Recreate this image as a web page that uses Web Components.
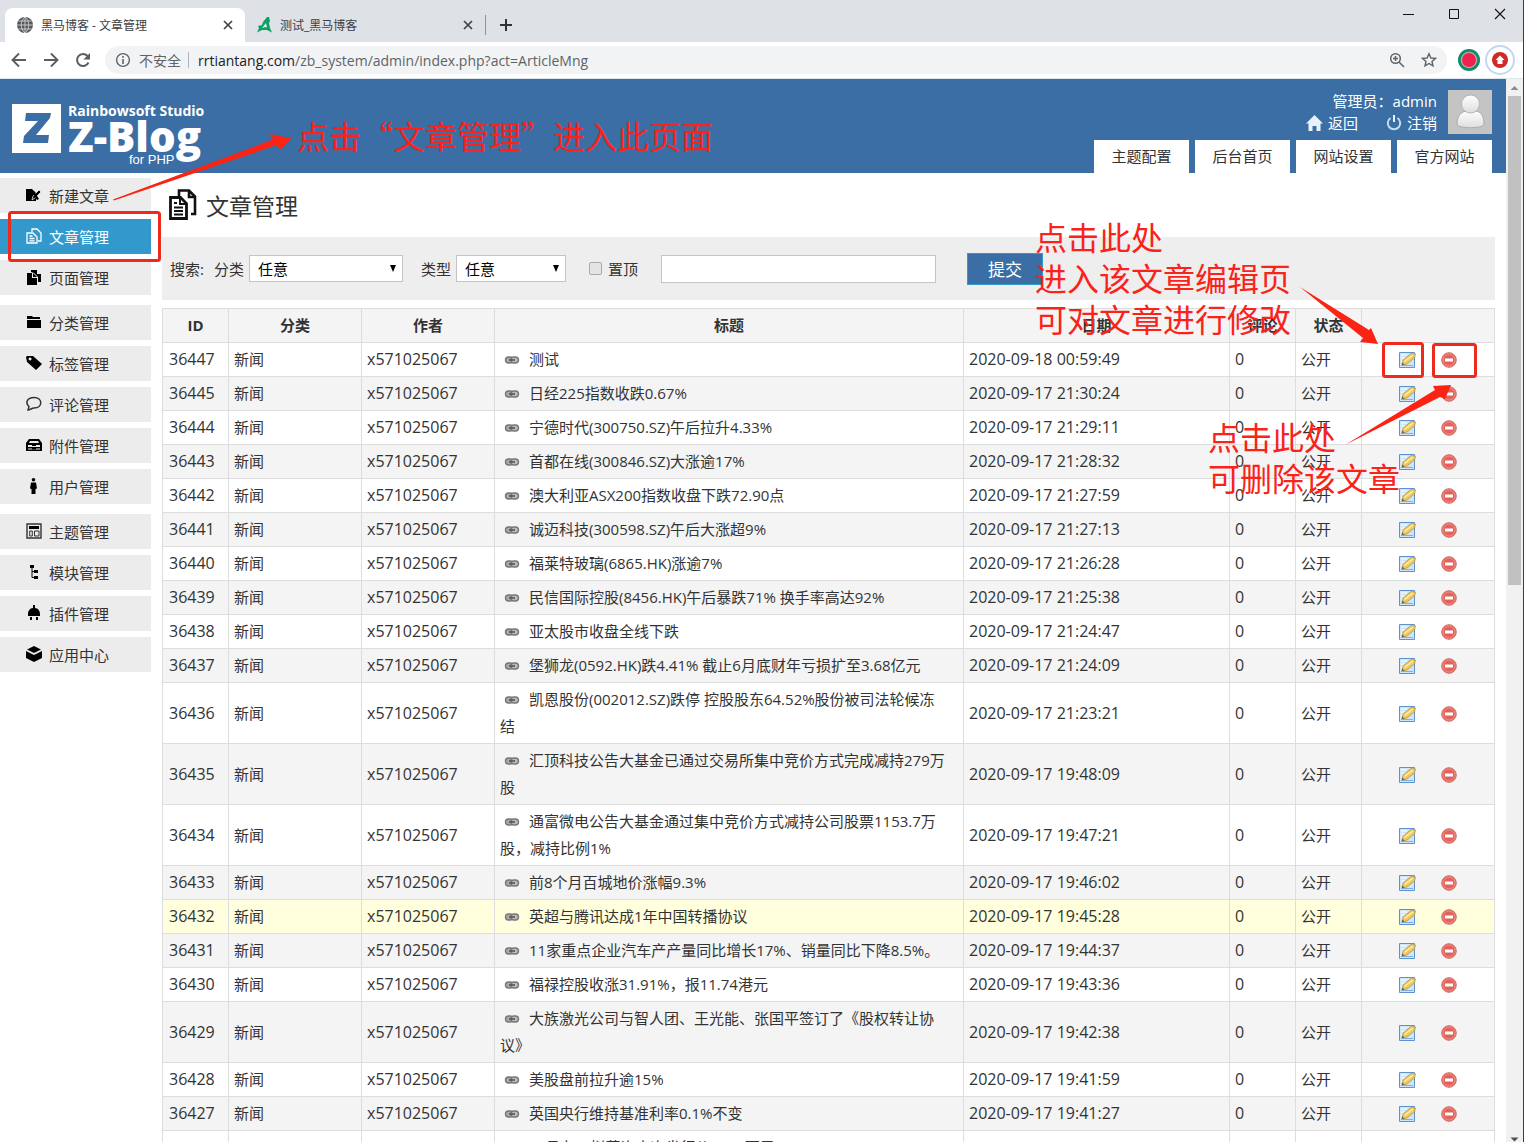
<!DOCTYPE html>
<html lang="zh-CN">
<head>
<meta charset="utf-8">
<title>黑马博客 - 文章管理</title>
<style>
html,body{margin:0;height:100%;overflow:hidden}
body{font-family:"Open Sans","Noto Sans CJK SC",sans-serif;font-size:15px;color:#333;background:#fff}
</style>
</head>
<body>
<browser-window>
  <browser-tabs slot="chrome"></browser-tabs>
  <browser-toolbar slot="chrome"></browser-toolbar>
  <zb-header></zb-header>
  <zb-layout>
    <zb-sidebar slot="side"></zb-sidebar>
    <zb-heading>文章管理</zb-heading>
    <zb-search></zb-search>
    <zb-articles></zb-articles>
  </zb-layout>
</browser-window>
<guide-marks></guide-marks>
<guide-note style="--x:297px;--y:115px">点击“文章管理”进入此页面</guide-note>
<guide-note style="--x:1035px;--y:216px">点击此处<br>进入该文章编辑页<br>可对文章进行修改</guide-note>
<guide-note style="--x:1208px;--y:416px">点击此处<br>可删除该文章</guide-note>

<script>
function define(name, html, init) {
  const tpl = document.createElement('template');
  tpl.innerHTML = '<style>*,:host{box-sizing:border-box}svg{display:block;flex:none}a{color:inherit;text-decoration:none}</style>' + html;
  customElements.define(name, class extends HTMLElement {
    constructor() {
      super();
      this.attachShadow({mode: 'open'}).append(tpl.content.cloneNode(true));
      if (init) init(this.shadowRoot);
    }
  });
}

define('browser-window', `
<style>
:host{display:flex;flex-direction:column;height:100vh;overflow:hidden;border-right:1px solid #3c3a52}
.view{flex:1;min-height:0;display:flex;border-top:1px solid #dbe6ee}
.page{flex:1;min-width:0;overflow:hidden}
.bar{width:17px;background:#f1f1f1;display:flex;flex-direction:column;align-items:center;padding:0 2px}
.thumb{width:13px;flex:0 0 46%;background:#c1c1c1}
.grow{flex:1}
</style>
<slot name="chrome"></slot>
<div class="view"><div class="page"><slot></slot></div>
<div class="bar"><svg width="13" height="17" viewBox="0 0 13 17"><path d="M2.500 11L6.500 7l4 4z" fill="#8c8c8c"/></svg><div class="thumb"></div><div class="grow"></div>
<svg width="13" height="8" viewBox="0 0 13 8"><path d="M2.500 3.500h8l-4 4z" fill="#505050"/></svg></div></div>`);

define('browser-tabs', `
<style>
:host{display:flex;height:42px;background:#dee1e6;font-size:12px;color:#3c4043;padding:8px 0 0 5px}
.tab{display:flex;align-items:center;width:240px;padding:0 10px 0 12px;gap:8px}
.tab.on{background:#fff;border-radius:8px 8px 0 0}
.tab span{flex:1}
button{border:0;background:none;padding:0;display:block}
.close{width:14px;height:14px}
.new{display:flex;align-items:center;gap:14px}
.new i{width:1px;height:20px;background:#8f9297}
.win{margin-left:auto;display:flex;gap:32px;padding:0 16px 0 0;align-items:flex-start}
.win button{margin-top:-1px}
</style>
<div class="tab on"><svg width="16" height="16" viewBox="0 0 16 16"><circle cx="8" cy="8" r="8" fill="#55585c"/><path d="M0 8h16M8 0v16M1.500 4h13M1.500 12h13M8 0C3 4 3 12 8 16M8 0c5 4 5 12 0 16" fill="none" stroke="#dfe0e1" stroke-width=".8"/></svg><span>黑马博客 - 文章管理</span><button class="close" aria-label="关闭"><svg width="14" height="14" viewBox="0 0 14 14"><path d="M3 3l8 8M11 3l-8 8" stroke="#404347" stroke-width="1.700"/></svg></button></div>
<div class="tab"><svg width="15" height="16" viewBox="0 0 15 16"><path d="M0 15.500L2 11 1 9l4-1 1-3 4-5 2 0 1 4-1 2 1 5 2 4.500-5-2.500-5 0z" fill="#0f9f63"/><path d="M5 11l4-5 1 4.500-2-.500z" fill="#dff3e8"/></svg><span>测试_黑马博客</span><button class="close" aria-label="关闭"><svg width="14" height="14" viewBox="0 0 14 14"><path d="M3 3l8 8M11 3l-8 8" stroke="#404347" stroke-width="1.700"/></svg></button></div>
<div class="new"><i></i><button aria-label="新标签页"><svg width="12" height="12" viewBox="0 0 12 12"><path d="M6 0v12M0 6h12" stroke="#303336" stroke-width="2"/></svg></button></div>
<div class="win">
<button aria-label="最小化"><svg width="14" height="14" viewBox="0 0 14 14"><path d="M2 7.500h11" stroke="#111"/></svg></button>
<button aria-label="最大化"><svg width="14" height="14" viewBox="0 0 14 14"><path d="M2.500 2.500h9v9h-9z" fill="none" stroke="#111"/></svg></button>
<button aria-label="关闭窗口"><svg width="14" height="14" viewBox="0 0 14 14"><path d="M2 2l10 10M12 2L2 12" stroke="#111" stroke-width="1.100"/></svg></button></div>`);

define('browser-toolbar', `
<style>
:host{display:flex;align-items:center;height:36px;background:#fff;padding:0 8px 0 11px;font-size:14px}
button{border:0;background:none;padding:0;margin-right:16px}
.omni{flex:1;display:flex;align-items:center;height:28px;border-radius:14px;background:#f1f3f4;padding:0 10px;margin:0 11px 0 -2px;color:#5f6368}
.omni i{width:1px;height:16px;background:#b0b3b7;margin:0 9px 0 7px}
.omni span{margin-left:8px}
.url{flex:1}
.url b{font-weight:400;color:#202124}
.star{margin-left:16px}
.me{margin-left:5px}
</style>
<button aria-label="后退"><svg width="16" height="16" viewBox="0 0 16 16"><path d="M15 8H2M8 1.500L1.500 8 8 14.500" fill="none" stroke="#5a5d61" stroke-width="1.900"/></svg></button>
<button aria-label="前进"><svg width="16" height="16" viewBox="0 0 16 16"><path d="M1 8h13M8 1.500L14.500 8 8 14.500" fill="none" stroke="#5a5d61" stroke-width="1.900"/></svg></button>
<button aria-label="刷新"><svg width="16" height="16" viewBox="0 0 16 16"><path d="M13.500 10.500A6 6 0 1 1 12.500 4" fill="none" stroke="#5a5d61" stroke-width="2"/><path d="M15 1v6.500H8.500z" fill="#5a5d61"/></svg></button>
<div class="omni"><svg width="16" height="16" viewBox="0 0 16 16"><circle cx="8" cy="8" r="6.400" fill="none" stroke="#5f6368" stroke-width="1.400"/><path d="M8 7v5M8 4v1.700" stroke="#5f6368" stroke-width="1.600"/></svg><span>不安全</span><i></i>
<div class="url"><b>rrtiantang.com</b>/zb_system/admin/index.php?act=ArticleMng</div>
<svg width="16" height="16" viewBox="0 0 16 16"><circle cx="6.500" cy="6.500" r="4.800" fill="none" stroke="#5f6368" stroke-width="1.500"/><path d="M10 10l5 5M4 6.500h5M6.500 4v5" stroke="#5f6368" stroke-width="1.500"/></svg>
<svg class="star" width="16" height="16" viewBox="0 0 16 16"><path d="M8 1.800l1.900 4.200 4.500.4-3.400 3 1 4.500L8 11.500l-4 2.400 1-4.500-3.400-3 4.500-.4z" fill="none" stroke="#5f6368" stroke-width="1.400"/></svg></div>
<svg width="22" height="22" viewBox="0 0 22 22"><circle cx="11" cy="11" r="11" fill="#128a6c"/><circle cx="11" cy="11" r="7.600" fill="#f0214f" stroke="#bcaaa0" stroke-width="1.300"/></svg>
<svg class="me" width="30" height="30" viewBox="0 0 30 30"><circle cx="15" cy="15" r="14" fill="#fff" stroke="#c3d7f0" stroke-width="2"/><circle cx="15" cy="15" r="8" fill="#cf2a27"/><path d="M15 10.500l4.500 4.500h-2v4h-5v-4h-2z" fill="#fff"/></svg>`);

define('zb-header', `
<style>
:host{display:flex;justify-content:space-between;height:94px;background:#3a6ea5;color:#fff;padding:0 14px 0 12px}
.logo{display:flex;gap:7px;padding-top:25px}
.names{display:flex;flex-direction:column;font-weight:700;white-space:nowrap}
.names small{font-size:14px;line-height:14px}
.names strong{font-size:42px;line-height:36px}
.names em{font:normal 400 13px/12px "Liberation Sans",sans-serif;margin:0 0 0 61px}
.right{display:flex;flex-direction:column;justify-content:space-between;align-items:flex-end;padding-top:11px}
.user{display:flex;gap:11px;line-height:22px}
.info{text-align:right}
.links{display:flex;justify-content:flex-end;gap:28px}
.links a{display:flex;align-items:center;gap:5px}
nav{display:flex;gap:6px}
nav a{width:95px;height:33px;line-height:33px;text-align:center;background:#fff;color:#333}
</style>
<div class="logo"><svg width="49" height="49" viewBox="0 0 49 49"><path fill="#fff" d="M0 0h49v49H0z"/><path d="M14 9h25l-1 5-14 17h13l-1 8H11l1-7 14-15H13z" fill="#3a6ea5"/></svg>
<div class="names"><small>Rainbowsoft Studio</small><strong>Z-Blog</strong><em>for PHP</em></div></div>
<div class="right"><div class="user"><div class="info"><div>管理员：admin</div><div class="links">
<a href="#"><svg width="17" height="16" viewBox="0 0 17 16"><path d="M8.500 0L17 8.500h-2.500V16h-4v-5h-4v5h-4V8.500H0z" fill="#e9f2fb"/></svg>返回</a>
<a href="#"><svg width="16" height="16" viewBox="0 0 16 16"><path d="M4.500 3a6.200 6.200 0 1 0 7 0" fill="none" stroke="#c4dcf2" stroke-width="2"/><path d="M8 0v7" stroke="#e9f2fb" stroke-width="2"/></svg>注销</a></div></div>
<svg width="44" height="44" viewBox="0 0 44 44"><defs><linearGradient id="g" x2="0" y2="1"><stop stop-color="#fff"/><stop offset="1" stop-color="#dedede"/></linearGradient></defs><path fill="#c4c4c4" d="M0 0h44v44H0z"/><path d="M9 34c0-8 4-12 9-13h10c5 1 8 5 8 13 0 5-27 5-27 0z" fill="url(#g)" stroke="#aaa"/><circle cx="22.500" cy="14" r="9" fill="url(#g)" stroke="#b5b5b5"/></svg></div>
<nav><a href="#">主题配置</a><a href="#">后台首页</a><a href="#">网站设置</a><a href="#">官方网站</a></nav></div>`);

define('zb-layout', `
<style>
:host{display:flex;gap:11px;padding-right:11px}
main{flex:1;min-width:0}
</style><slot name="side"></slot><main><slot></slot></main>`);

define('zb-heading', `
<style>
:host{display:block}
h1{display:flex;align-items:center;gap:9px;height:64px;margin:0;padding-left:7px;font-size:23px;font-weight:400}
</style>
<h1><svg width="28" height="32" viewBox="0 0 28 32"><path d="M10 7V1.500h10l6 6V25h-4M20 1.500V8h6" fill="none" stroke="#111" stroke-width="2.600"/><path d="M1.500 8.500h10l6 6v15h-16z" fill="#fff" stroke="#111" stroke-width="2.800"/><path d="M11 9v6h6M5 14h3M5 18.500h9M5 22h9M5 25.500h9" fill="none" stroke="#111" stroke-width="2"/></svg><slot></slot></h1>`);

const icons = {
  pen: '<path d="M0 2h6l4 4v8H0z"/><path d="M6 13l1-4 6-6 2 2-6 6z" stroke="#ececec" stroke-width=".8"/><path d="M8 4l5 8-2 1-4-6z"/>',
  docs: '<path d="M6 4V1h5l4 4v8h-3M1 5h6l4 4v6H1zM3.500 8h3M3.500 10.500h5M3.500 12.800h5" fill="none" stroke="#fff" stroke-width="1.300"/>',
  pages: '<path d="M5 3V1h6v4h4v8h-3V8L8 4z"/><path d="M1 4h5v5h5v7H1z"/><path d="M7 4l4 4H7z"/>',
  folder: '<path d="M1 2h5l1 1h7v2H1z"/><path d="M1 6h14v8H1z"/>',
  tag: '<path fill-rule="evenodd" d="M0 2l1-1 6 0 9 8-6 6L1 7zM4 2.500a1.500 1.500 0 1 0 .1 0z"/>',
  talk: '<path d="M8 1.500c9 0 9 10.500 0 10.500-2 0-4 2-6 2l1-3.500C-1 7 1 1.500 8 1.500z" fill="none" stroke="#333" stroke-width="1.500"/>',
  drawer: '<path fill-rule="evenodd" d="M3 2h10l3 4v8H0V6zM3 6h10l-1-2H4zM2 8v2h12V8zM2 11.500v1h12v-1z"/><path d="M6 7h4v2H6zM6 11h4v1.500H6z"/>',
  user: '<circle cx="7.500" cy="1.800" r="1.800"/><path d="M5 4.500h5l1 6-1.500.5V16h-4v-5L4 10.500z"/>',
  theme: '<path d="M1 1h14v14H1z" fill="none" stroke="#333" stroke-width="1.400"/><path d="M3 3h10v3H3z"/><path d="M3.700 8h2.600v5H3.700zM8.500 8H13v5H8.500z" fill="none" stroke="#333"/>',
  tree: '<path d="M4 1h4v3H4zM8 6h4v3H8zM8 12h4v3H8z"/><path d="M6 3v10.500h3M6 7.500h3" fill="none" stroke="#000"/>',
  plug: '<path d="M7 0h2v3c3 0 5 3 5 6v2H2V9c0-3 2-6 5-6zM4 12h2v3H4zM10 12h2v3h-2z"/>',
  box: '<path d="M8 0l7 3.500-7 3.500-7-3.500zM0 5l8 4 8-4v7l-8 4-8-4z"/>'
};
define('zb-sidebar', `
<style>
:host{display:flex;flex-direction:column;gap:10px;width:151px;padding-top:5px;flex:none}
.g{display:flex;flex-direction:column;gap:6px}
a{display:flex;align-items:center;gap:7px;height:35px;padding:0 0 1px 26px;background:#ececec}
a.on{background:#3399cc;color:#fff}
</style>`, root => {
  const groups = [[['pen','新建文章'],['docs','文章管理'],['pages','页面管理']],
    [['folder','分类管理'],['tag','标签管理'],['talk','评论管理'],['drawer','附件管理'],['user','用户管理']],
    [['theme','主题管理'],['tree','模块管理'],['plug','插件管理'],['box','应用中心']]];
  const t = document.createElement('template');
  t.innerHTML = groups.map(g => '<div class="g">' + g.map(([i, s]) =>
    `<a href="#"${i === 'docs' ? ' class="on"' : ''}><svg width="16" height="16" viewBox="0 0 16 16">${icons[i]}</svg>${s}</a>`).join('') + '</div>').join('');
  root.append(t.content);
});

define('zb-search', `
<style>
:host{display:block}
form{display:flex;align-items:center;height:63px;background:#eee;padding:0 8px;margin-bottom:8px}
.pick{display:grid;align-items:center;margin:0 18px 0 5px}
.pick>*{grid-area:1/1}
.pick svg{justify-self:end;margin-right:6px;pointer-events:none}
select,input,button{font:inherit;border-radius:0}
select{appearance:none;height:27px;border:1px solid #c4c4c4;background:#fff;color:#000;padding:0 8px}
.cat{width:154px}.type{width:110px}
.first{margin-left:10px}
input[type=checkbox]{appearance:none;width:13px;height:13px;margin:0 6px 0 5px;border:1px solid #aaa;border-radius:2px;background:#e4e4e4}
input[type=text]{width:275px;height:28px;border:1px solid #c4c4c4;background:#fff;margin:0 31px 0 23px;padding:0 6px}
button{width:76px;height:32px;border:1px solid #3399cc;background:#3a6ea5;color:#fff;font-size:17px;padding:0}
</style>
<form><span>搜索:</span><label class="first" for="c">分类</label><div class="pick"><select class="cat" id="c"><option>任意</option></select><svg width="8" height="8" viewBox="0 0 8 8"><path d="M1 0h6L4 7z"/></svg></div>
<label for="t">类型</label><div class="pick"><select class="type" id="t"><option>任意</option></select><svg width="8" height="8" viewBox="0 0 8 8"><path d="M1 0h6L4 7z"/></svg></div>
<input type="checkbox" id="top"><label for="top">置顶</label><input type="text" aria-label="关键词"><button type="button">提交</button></form>`);

define('zb-articles', `
<style>
:host{display:block}
table{width:100%;table-layout:fixed;border-collapse:collapse;line-height:27px}
th,td{border:1px solid #ddd;padding:3px 5px 3px 5px;text-align:left;font-weight:400}
td:first-child{padding-left:6px}
th{text-align:center;font-weight:700;background:#f4f4f4}
tr:nth-child(even) td{background:#f4f4f4}
tbody tr.hot td{background:#ffffdd}
.s{width:66px}.m{width:133px}.l{width:266px}
.n{font-size:16px}
td.t{padding-right:14px}
td>svg{display:inline-block;vertical-align:-3px;margin:0 9px 0 4px}
.act{display:flex;justify-content:center;gap:26px;padding-top:1px}
.act a{width:16px;display:flex;justify-content:center}
</style>
<table><thead><tr><th class="s">ID</th><th class="m">分类</th><th class="m">作者</th><th>标题</th><th class="l">日期</th><th class="s">评论</th><th class="s">状态</th><th class="m"></th></tr></thead><tbody></tbody></table>`, root => {
  const rows = `36447|测试|18 00:59:49
36445|日经225指数收跌0.67%|17 21:30:24
36444|宁德时代(300750.SZ)午后拉升4.33%|17 21:29:11
36443|首都在线(300846.SZ)大涨逾17%|17 21:28:32
36442|澳大利亚ASX200指数收盘下跌72.90点|17 21:27:59
36441|诚迈科技(300598.SZ)午后大涨超9%|17 21:27:13
36440|福莱特玻璃(6865.HK)涨逾7%|17 21:26:28
36439|民信国际控股(8456.HK)午后暴跌71% 换手率高达92%|17 21:25:38
36438|亚太股市收盘全线下跌|17 21:24:47
36437|堡狮龙(0592.HK)跌4.41% 截止6月底财年亏损扩至3.68亿元|17 21:24:09
36436|凯恩股份(002012.SZ)跌停 控股股东64.52%股份被司法轮候冻结|17 21:23:21
36435|汇顶科技公告大基金已通过交易所集中竞价方式完成减持279万股|17 19:48:09
36434|通富微电公告大基金通过集中竞价方式减持公司股票1153.7万股，减持比例1%|17 19:47:21
36433|前8个月百城地价涨幅9.3%|17 19:46:02
36432|英超与腾讯达成1年中国转播协议|17 19:45:28
36431|11家重点企业汽车产产量同比增长17%、销量同比下降8.5%。|17 19:44:37
36430|福禄控股收涨31.91%，报11.74港元|17 19:43:36
36429|大族激光公司与智人团、王光能、张国平签订了《股权转让协议》|17 19:42:38
36428|美股盘前拉升逾15%|17 19:41:59
36427|英国央行维持基准利率0.1%不变|17 19:41:27
36426|<span>ST昌九：拟募资本次发行价1000万元</span><br>公告|17 19:40:52`.split('\n');
  const link = '<svg width="16" height="16" viewBox="0 0 16 16"><rect x="1.500" y="5" width="7.500" height="6" rx="3" fill="#aaa" stroke="#777" stroke-width="1.400"/><rect x="7" y="5" width="7.500" height="6" rx="3" fill="#bbb" stroke="#777" stroke-width="1.400"/><path d="M5 8h6" stroke="#555" stroke-width="1.600"/></svg>';
  const edit = '<svg width="18" height="18" viewBox="0 0 18 18"><path d="M1.500 1.500h15v15h-15z" fill="#cfe5fa" stroke="#5b92cf"/><path d="M3 4h6M3 7h5M3 10h2" stroke="#fff"/><path d="M3 14.500h12" stroke="#7fb0e2"/><path d="M4 14l1-5L13 2.500l4.500.5-1 4L9 13z" fill="#edc95c" stroke="#b8964a" stroke-width=".8"/><path d="M6.500 10.500L15 4" stroke="#fff0b0" stroke-width="1.400"/><path d="M4 14l.5-2.200L6.300 13.400z" fill="#444"/></svg>';
  const del = '<svg width="16" height="18" viewBox="0 0 16 18"><circle cx="8" cy="9" r="7.300" fill="#e3625a" stroke="#d2736b"/><circle cx="8" cy="9" r="6" fill="none" stroke="#f09a92" stroke-width=".8"/><path d="M4 7.500h8v3H4z" fill="#fff"/></svg>';
  root.querySelector('tbody').innerHTML = rows.map(r => {
    const [id, title, date] = r.split('|');
    return `<tr${id === '36432' ? ' class="hot"' : ''}><td class="n">${id}</td><td>新闻</td><td class="n">x571025067</td><td class="t">${link}${title}</td><td class="n">2020-09-${date}</td><td class="n">0</td><td>公开</td><td><div class="act"><a href="#" aria-label="编辑">${edit}</a><a href="#" aria-label="删除">${del}</a></div></td></tr>`;
  }).join('');
});

define('guide-marks', `
<style>:host{position:absolute;left:0;top:0;pointer-events:none}</style>
<svg width="1500" height="520" viewBox="0 0 1500 520"><g fill="#fb2314"><path d="M113 199.500L273 139.500l-3-5.500 21.500 4.500L280 150l-3-5L114 200.500z"/><path d="M1300 287l69 43 2-2 7 16-18-2 3-4z"/><path d="M1345 445l90-55-2-4 18-1-6 14-5-2z"/></g>
<g fill="none" stroke="#ee2a1c" stroke-width="3"><rect x="9.500" y="212.500" width="150" height="48" rx="2"/><rect x="1383.500" y="343.500" width="39" height="33" rx="2"/><rect x="1433.500" y="344.500" width="42" height="32" rx="2"/></g></svg>`);

define('guide-note', `
<style>:host{position:absolute;left:var(--x);top:var(--y);font-family:"Noto Sans CJK SC",sans-serif;font-size:32px;line-height:41px;font-weight:400;color:#f9231a;white-space:nowrap;pointer-events:none}</style><slot></slot>`);
</script>
</body>
</html>
